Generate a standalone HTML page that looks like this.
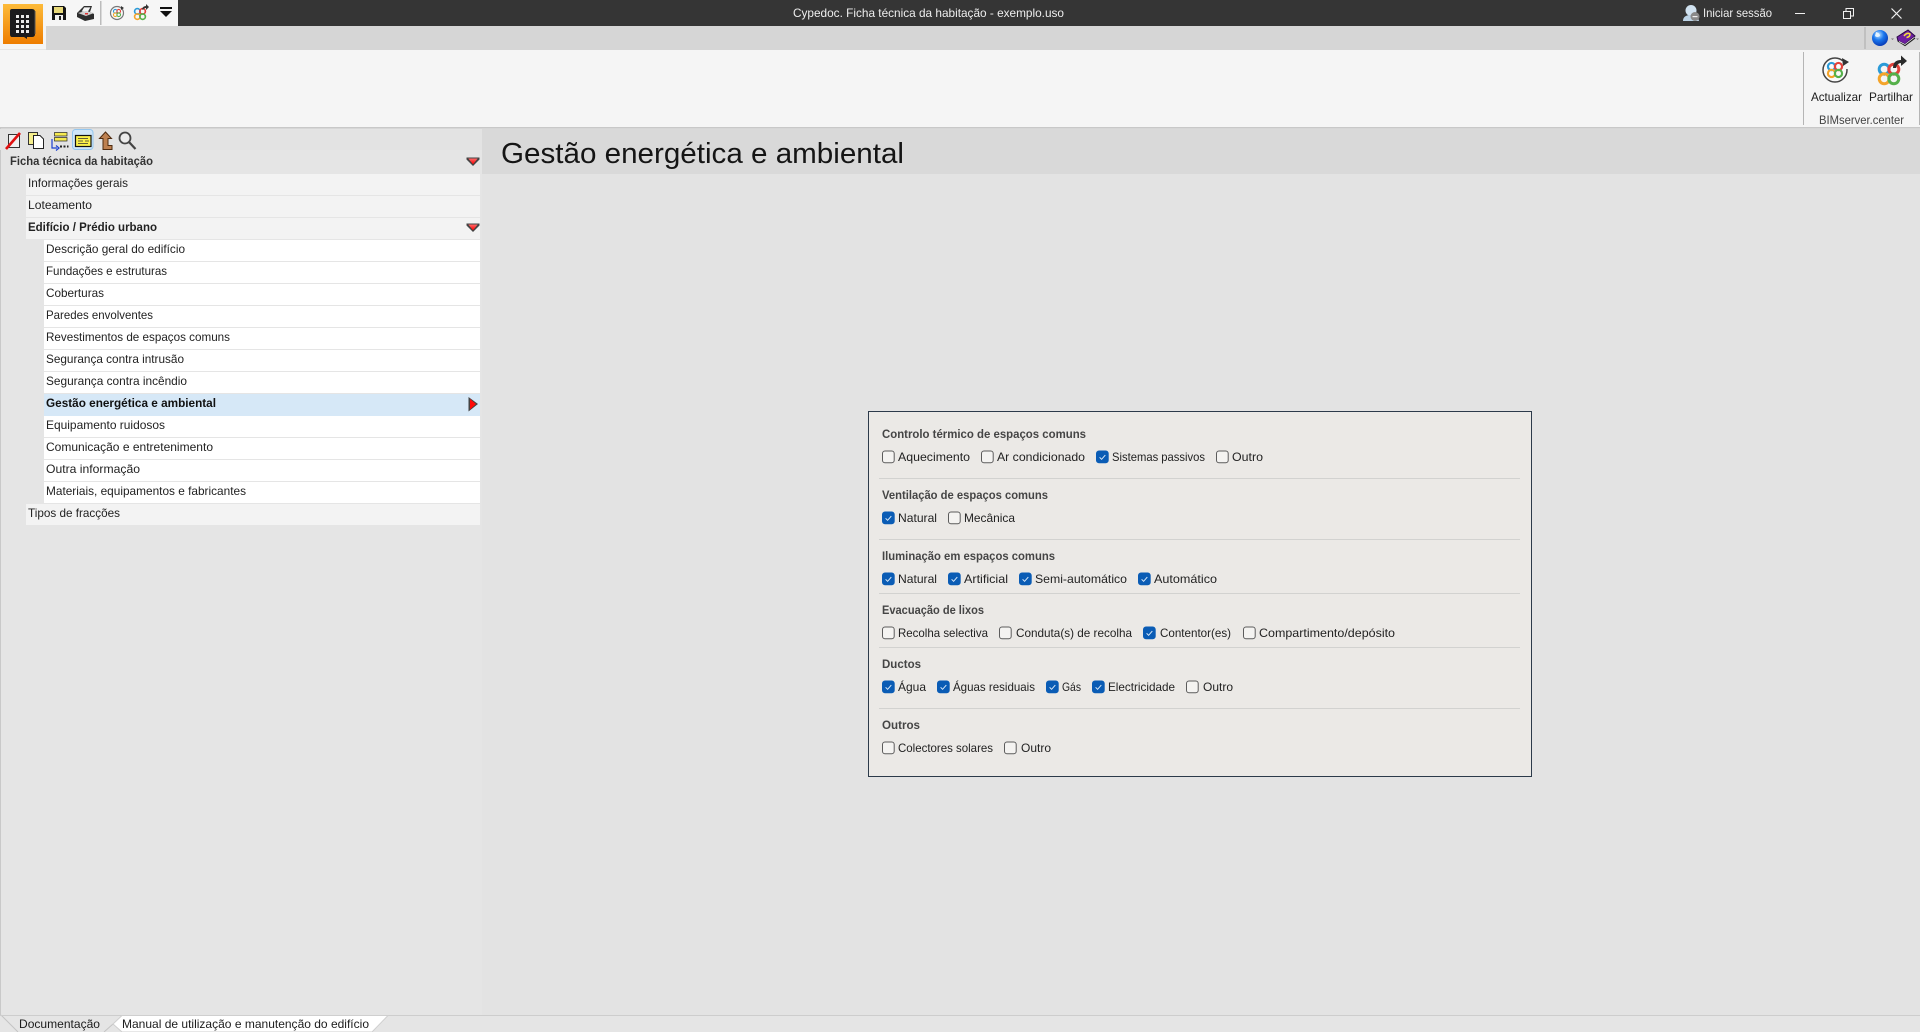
<!DOCTYPE html>
<html lang="pt">
<head>
<meta charset="utf-8">
<title>Cypedoc. Ficha técnica da habitação - exemplo.uso</title>
<style>
html,body{margin:0;padding:0;width:1920px;height:1032px;overflow:hidden;background:#e3e3e3}
svg{display:block}
text{font-family:"Liberation Sans",Arial,sans-serif;font-size:12px;fill:#222}
.b{font-weight:bold}
.h{font-weight:bold;fill:#454545}
.t{fill:#eee}
.c{fill:#1c1c1c}
</style>
</head>
<body>
<svg xmlns="http://www.w3.org/2000/svg" width="1920" height="1032" viewBox="0 0 1920 1032">
<defs>
<linearGradient id="or" x1="0" y1="0" x2="0" y2="1"><stop offset="0" stop-color="#fdbb3a"/><stop offset="1" stop-color="#ee7d00"/></linearGradient>
<radialGradient id="gl" cx=".4" cy=".3" r=".75"><stop offset="0" stop-color="#bfe4ff"/><stop offset=".45" stop-color="#1c78ee"/><stop offset="1" stop-color="#0534b0"/></radialGradient>
<linearGradient id="red" x1="0" y1="0" x2="0" y2="1"><stop offset="0" stop-color="#ff6a6a"/><stop offset="1" stop-color="#ff0000"/></linearGradient>
<g id="cb0"><rect x=".5" y=".5" width="11.700" height="11.700" rx="2.500" fill="#f4f3f1" stroke="#5c5c5c"/></g>
<g id="cb1"><rect width="12.700" height="12.700" rx="3" fill="#0a5cb5"/><path d="M3.600 6.800l2 2 3.700-4.200" fill="none" stroke="#d8e8f8" stroke-width="1"/></g>
<g id="rings" fill="none" stroke-width="3">
<circle cx="-4.800" cy="-4.800" r="5" stroke="#2b9bd8"/>
<circle cx="4.800" cy="-4.800" r="5" stroke="#e2413a"/>
<circle cx="-4.800" cy="4.800" r="5" stroke="#f4a42a"/>
<circle cx="4.800" cy="4.800" r="5" stroke="#55b04a"/>
</g>
<g id="dn"><path d="M0 .5H13V2.500L6.500 9 0 2.500Z" fill="#444"/><path d="M1.800 1.500H11.200L6.500 7.200Z" fill="url(#red)"/></g>
</defs>

<!-- title bar -->
<rect width="1920" height="26" fill="#353535"/>
<rect y="26" width="1920" height="24" fill="#d6d6d6"/>
<rect y="50" width="1920" height="77" fill="#f5f5f5"/>
<rect y="127" width="1920" height="1.500" fill="#c8c8c8"/>
<rect x="46" width="132" height="26" fill="#f6f6f6"/>
<rect width="46" height="49.500" fill="#f5f5f5"/>
<rect x="3" y="4" width="40" height="40" fill="url(#or)"/>
<path d="M12 9H32Q35 9 35 12V34Q35 37 32 37H27V39L24 37H12Q10 37 10 34V11Q10 9 12 9Z" fill="#1b1b1d"/>
<path d="M35 11V34" stroke="#555" stroke-width="1"/>
<g fill="#e8e8e8">
<rect x="16" y="15" width="3" height="3"/><rect x="21" y="15" width="3" height="3"/><rect x="26" y="15" width="3" height="3"/>
<rect x="16" y="20" width="3" height="3"/><rect x="21" y="20" width="3" height="3"/><rect x="26" y="20" width="3" height="3"/>
<rect x="16" y="25" width="3" height="3"/><rect x="21" y="25" width="3" height="3"/><rect x="26" y="25" width="3" height="3"/>
<rect x="16" y="30" width="3" height="3"/><rect x="21" y="30" width="3" height="3"/><rect x="26" y="30" width="3" height="3"/>
</g>
<!-- floppy -->
<path d="M52 6H64L66 8V20H52Z" fill="#151515"/>
<rect x="54" y="7" width="9" height="6" fill="#e8d97a"/>
<rect x="55" y="15" width="8" height="5" fill="#f2f2f2"/>
<rect x="59" y="16" width="2" height="4" fill="#222"/>
<!-- printer -->
<path d="M77 13L84 6H92L90 12L94 14V19L85 21L77 17Z" fill="#2e2e2e"/>
<path d="M84 7H91L88 12H81Z" fill="#f5f5f5" stroke="#333" stroke-width=".7"/>
<path d="M78 13L86 16L94 13L86 11Z" fill="#cfcfcf"/>
<rect x="85" y="13" width="3" height="1.500" fill="#d33"/>
<rect x="100" y="1" width="1.500" height="24" fill="#bcbcbc"/>
<!-- mini actualizar -->
<circle cx="117" cy="13" r="6.500" fill="#f8f8f8" stroke="#777" stroke-width="1.200"/>
<path d="M121 6l3 2-3 2z" fill="#333"/>
<g transform="translate(117 13) scale(.36)"><use href="#rings"/></g>
<!-- mini partilhar -->
<g transform="translate(140 14) scale(.55)"><use href="#rings"/></g>
<path d="M142 9Q143 6 146 6V4L149 7L146 10V8Q144 8 143 10Z" fill="#333"/>
<!-- dropdown -->
<rect x="160" y="7" width="12" height="2" fill="#111"/>
<path d="M160 11H172L166 17Z" fill="#111"/>

<text class="t" x="793" y="17" textLength="271" lengthAdjust="spacingAndGlyphs">Cypedoc. Ficha técnica da habitação - exemplo.uso</text>

<!-- session -->
<circle cx="1691" cy="10.500" r="5.500" fill="#d0e2f0"/>
<path d="M1683 21Q1683 15 1691 15Q1698 15 1699 21Z" fill="#bcd3e6"/>
<circle cx="1695" cy="16.500" r="4.500" fill="#8a8a8a"/>
<rect x="1692.500" y="16" width="5" height="1.200" fill="#f0f0f0"/>
<text class="t" x="1703" y="17" textLength="69" lengthAdjust="spacingAndGlyphs">Iniciar sessão</text>
<rect x="1795" y="13" width="10" height="1" fill="#f0f0f0"/>
<g fill="none" stroke="#f0f0f0" stroke-width="1"><rect x="1843.500" y="11.500" width="7" height="7"/><path d="M1846 11V8.500H1853.500V16H1851"/><path d="M1891.500 8.500L1901.500 18.500M1901.500 8.500L1891.500 18.500" stroke-width="1.200"/></g>

<!-- help area -->
<rect x="1864.500" y="27" width="1" height="22" fill="#aaa"/>
<circle cx="1880" cy="38" r="8" fill="url(#gl)"/>
<path d="M1876 32Q1880 33 1880 36Q1877 38 1875 36Z" fill="#e6f4ff"/>
<path d="M1891 38.500h3l-1.500 1.500z" fill="#777"/>
<path d="M1897 37L1908 30L1915 36L1905 44L1898 41Z" fill="#6d1fa0" stroke="#2a0b45"/>
<path d="M1898 41L1905 45.500L1915 38" fill="none" stroke="#222" stroke-width="1.300"/>
<path d="M1899 41.500L1905 44.500L1914 37.500" fill="none" stroke="#eee" stroke-width=".7"/>
<path d="M1904 36Q1907 32 1910 34Q1910 37 1906.500 37.500" fill="none" stroke="#f6de3c" stroke-width="1.600"/>
<path d="M1916 38.500h3l-1.500 1.500z" fill="#777"/>

<!-- ribbon group -->
<rect x="1803" y="52" width="1" height="73" fill="#b5b5b5"/>
<rect x="1919" y="52" width="1" height="73" fill="#b5b5b5"/>
<circle cx="1835" cy="70" r="12" fill="#fafafa" stroke="#444" stroke-width="1.500"/>
<rect x="1842" y="61" width="9" height="8" fill="#f5f5f5"/>
<path d="M1842 58L1849 62L1843 66Z" fill="#333"/>
<g transform="translate(1835 70) scale(.72)"><use href="#rings"/></g>
<g transform="translate(1889 74)"><use href="#rings"/></g>
<path d="M1893 68Q1893 60 1901 60V55.500L1907 61L1901 66V63Q1897 63 1896 68Z" fill="#2b2b2b"/>
<text class="c" x="1811" y="101" textLength="51" lengthAdjust="spacingAndGlyphs">Actualizar</text>
<text class="c" x="1869" y="101" textLength="44" lengthAdjust="spacingAndGlyphs">Partilhar</text>
<text x="1819" y="124" textLength="85" lengthAdjust="spacingAndGlyphs" style="fill:#444">BIMserver.center</text>

<!-- sidebar & main -->
<rect y="128.500" width="482" height="904" fill="#e5e5e5"/>
<rect x="0" y="128" width="1" height="887" fill="#c9c9c9"/>
<rect y="129" width="482" height="21" fill="#e3e3e3"/>
<rect x="482" y="129" width="1438" height="45" fill="#d9d9d9"/>
<rect x="482" y="174" width="1438" height="841" fill="#e3e3e3"/>

<!-- toolbar icons -->
<path d="M8.500 134.500H19.500V147.500H8.500Z" fill="#f0f0f0" stroke="#333"/>
<path d="M6 149L20 133" stroke="#e01010" stroke-width="2.600"/>
<rect x="28.500" y="132.500" width="9" height="12" fill="#f5ee8c" stroke="#333"/>
<path d="M33.500 135.500H40L43.500 139V148.500H33.500Z" fill="#fff" stroke="#222"/>
<g>
<rect x="54.500" y="132.500" width="12.500" height="3.500" fill="#f6ea50" stroke="#222" stroke-width=".7"/>
<rect x="54.500" y="137.500" width="12.500" height="3.500" fill="#f6ea50" stroke="#222" stroke-width=".7"/>
<path d="M52 139V148H57" fill="none" stroke="#1a3fd0" stroke-width="1.200"/>
<path d="M56 145.500L59 148L56 150.500" fill="none" stroke="#1a3fd0" stroke-width="1.200"/>
<path d="M60 146.500h2M63.500 146.500h2M67 146.500h1.500" stroke="#222" stroke-width="2"/>
</g>
<rect x="72.500" y="129.500" width="20.500" height="20" rx="3" fill="#cfe5f8" stroke="#93c6ef"/>
<rect x="75.500" y="135.500" width="15.500" height="11" fill="#fbf04a" stroke="#111" stroke-width="1.200"/>
<path d="M78 138.500H88M78 141H83M85 141H89M78 143.500H88" stroke="#333" stroke-width=".7"/>
<path d="M99.500 138.500L105.500 132L111.500 138.500H108V145.500H112V149.500H103V138.500Z" fill="#bd8050" stroke="#4e2b10"/>
<circle cx="125" cy="138" r="5.500" fill="#ececec" stroke="#444" stroke-width="1.800"/>
<path d="M129 142L135.500 149" stroke="#444" stroke-width="2.200"/>

<!-- tree -->
<text class="b" x="10" y="165" textLength="143" lengthAdjust="spacingAndGlyphs" style="fill:#333">Ficha técnica da habitação</text>
<use href="#dn" x="466.500" y="157"/>

<g fill="#f3f3f3"><rect x="26" y="174" width="454" height="21"/><rect x="26" y="196" width="454" height="21"/><rect x="26" y="218" width="454" height="21"/><rect x="26" y="504" width="454" height="21"/></g>
<g fill="#fff">
<rect x="44" y="240" width="436" height="21"/><rect x="44" y="262" width="436" height="21"/><rect x="44" y="284" width="436" height="21"/><rect x="44" y="306" width="436" height="21"/><rect x="44" y="328" width="436" height="21"/><rect x="44" y="350" width="436" height="21"/><rect x="44" y="372" width="436" height="21"/>
<rect x="44" y="416" width="436" height="21"/><rect x="44" y="438" width="436" height="21"/><rect x="44" y="460" width="436" height="21"/><rect x="44" y="482" width="436" height="21"/>
</g>
<rect x="44" y="394" width="436" height="22" fill="#d6e8f7"/>
<use href="#dn" x="466.500" y="223"/>
<path d="M468.500 397L478 404L468.500 411.500Z" fill="#444"/>
<path d="M470 399L476 404L470 409.500Z" fill="#ff0a0a"/>

<text x="28" y="187" textLength="100" lengthAdjust="spacingAndGlyphs">Informações gerais</text>
<text x="28" y="209" textLength="64" lengthAdjust="spacingAndGlyphs">Loteamento</text>
<text class="b" x="28" y="231" textLength="129" lengthAdjust="spacingAndGlyphs">Edifício / Prédio urbano</text>
<text x="46" y="253" textLength="139" lengthAdjust="spacingAndGlyphs">Descrição geral do edifício</text>
<text x="46" y="275" textLength="121" lengthAdjust="spacingAndGlyphs">Fundações e estruturas</text>
<text x="46" y="297" textLength="58" lengthAdjust="spacingAndGlyphs">Coberturas</text>
<text x="46" y="319" textLength="107" lengthAdjust="spacingAndGlyphs">Paredes envolventes</text>
<text x="46" y="341" textLength="184" lengthAdjust="spacingAndGlyphs">Revestimentos de espaços comuns</text>
<text x="46" y="363" textLength="138" lengthAdjust="spacingAndGlyphs">Segurança contra intrusão</text>
<text x="46" y="385" textLength="141" lengthAdjust="spacingAndGlyphs">Segurança contra incêndio</text>
<text class="b" x="46" y="407" textLength="170" lengthAdjust="spacingAndGlyphs" style="fill:#111">Gestão energética e ambiental</text>
<text x="46" y="429" textLength="119" lengthAdjust="spacingAndGlyphs">Equipamento ruidosos</text>
<text x="46" y="451" textLength="167" lengthAdjust="spacingAndGlyphs">Comunicação e entretenimento</text>
<text x="46" y="473" textLength="94" lengthAdjust="spacingAndGlyphs">Outra informação</text>
<text x="46" y="495" textLength="200" lengthAdjust="spacingAndGlyphs">Materiais, equipamentos e fabricantes</text>
<text x="28" y="517" textLength="92" lengthAdjust="spacingAndGlyphs">Tipos de fracções</text>

<!-- page heading -->
<text x="501" y="163" textLength="403" lengthAdjust="spacingAndGlyphs" style="font-size:29px;fill:#151515">Gestão energética e ambiental</text>

<!-- form panel -->
<rect x="868.500" y="411.500" width="663" height="365" fill="#ebe9e6" stroke="#2c3a4a"/>
<g fill="#d2d2d0">
<rect x="879" y="478" width="641" height="1"/><rect x="879" y="539" width="641" height="1"/><rect x="879" y="593" width="641" height="1"/><rect x="879" y="647" width="641" height="1"/><rect x="879" y="708" width="641" height="1"/>
</g>

<text class="h" x="882" y="438" textLength="204" lengthAdjust="spacingAndGlyphs">Controlo térmico de espaços comuns</text>
<use href="#cb0" x="882" y="450.500"/><text x="898" y="461" textLength="72" lengthAdjust="spacingAndGlyphs">Aquecimento</text>
<use href="#cb0" x="981" y="450.500"/><text x="997" y="461" textLength="88" lengthAdjust="spacingAndGlyphs">Ar condicionado</text>
<use href="#cb1" x="1096" y="450.500"/><text x="1112" y="461" textLength="93" lengthAdjust="spacingAndGlyphs">Sistemas passivos</text>
<use href="#cb0" x="1216" y="450.500"/><text x="1232" y="461" textLength="31" lengthAdjust="spacingAndGlyphs">Outro</text>

<text class="h" x="882" y="499" textLength="166" lengthAdjust="spacingAndGlyphs">Ventilação de espaços comuns</text>
<use href="#cb1" x="882" y="511.500"/><text x="898" y="522" textLength="39" lengthAdjust="spacingAndGlyphs">Natural</text>
<use href="#cb0" x="948" y="511.500"/><text x="964" y="522" textLength="51" lengthAdjust="spacingAndGlyphs">Mecânica</text>

<text class="h" x="882" y="560" textLength="173" lengthAdjust="spacingAndGlyphs">Iluminação em espaços comuns</text>
<use href="#cb1" x="882" y="572.500"/><text x="898" y="583" textLength="39" lengthAdjust="spacingAndGlyphs">Natural</text>
<use href="#cb1" x="948" y="572.500"/><text x="964" y="583" textLength="44" lengthAdjust="spacingAndGlyphs">Artificial</text>
<use href="#cb1" x="1019" y="572.500"/><text x="1035" y="583" textLength="92" lengthAdjust="spacingAndGlyphs">Semi-automático</text>
<use href="#cb1" x="1138" y="572.500"/><text x="1154" y="583" textLength="63" lengthAdjust="spacingAndGlyphs">Automático</text>

<text class="h" x="882" y="614" textLength="102" lengthAdjust="spacingAndGlyphs">Evacuação de lixos</text>
<use href="#cb0" x="882" y="626.500"/><text x="898" y="637" textLength="90" lengthAdjust="spacingAndGlyphs">Recolha selectiva</text>
<use href="#cb0" x="999" y="626.500"/><text x="1016" y="637" textLength="116" lengthAdjust="spacingAndGlyphs">Conduta(s) de recolha</text>
<use href="#cb1" x="1143" y="626.500"/><text x="1160" y="637" textLength="71" lengthAdjust="spacingAndGlyphs">Contentor(es)</text>
<use href="#cb0" x="1243" y="626.500"/><text x="1259" y="637" textLength="136" lengthAdjust="spacingAndGlyphs">Compartimento/depósito</text>

<text class="h" x="882" y="668" textLength="39" lengthAdjust="spacingAndGlyphs">Ductos</text>
<use href="#cb1" x="882" y="680.500"/><text x="898" y="691" textLength="28" lengthAdjust="spacingAndGlyphs">Água</text>
<use href="#cb1" x="937" y="680.500"/><text x="953" y="691" textLength="82" lengthAdjust="spacingAndGlyphs">Águas residuais</text>
<use href="#cb1" x="1046" y="680.500"/><text x="1062" y="691" textLength="19" lengthAdjust="spacingAndGlyphs">Gás</text>
<use href="#cb1" x="1092" y="680.500"/><text x="1108" y="691" textLength="67" lengthAdjust="spacingAndGlyphs">Electricidade</text>
<use href="#cb0" x="1186" y="680.500"/><text x="1203" y="691" textLength="30" lengthAdjust="spacingAndGlyphs">Outro</text>

<text class="h" x="882" y="729" textLength="38" lengthAdjust="spacingAndGlyphs">Outros</text>
<use href="#cb0" x="882" y="741.500"/><text x="898" y="752" textLength="95" lengthAdjust="spacingAndGlyphs">Colectores solares</text>
<use href="#cb0" x="1004" y="741.500"/><text x="1021" y="752" textLength="30" lengthAdjust="spacingAndGlyphs">Outro</text>

<!-- bottom tabs -->
<rect y="1015" width="1920" height="17" fill="#e5e5e5"/>
<path d="M1 1015L18 1032M104 1032L113 1024" stroke="#c4c4c4" fill="none"/>
<path d="M0 1015.500H122" stroke="#cdcdcd" fill="none"/>
<path d="M388 1015.500H1920" stroke="#cdcdcd"/>
<path d="M122 1015.500H388L372 1032H122L113 1024Z" fill="#fff" stroke="#cfcfcf"/>
<text x="19" y="1028" textLength="81" lengthAdjust="spacingAndGlyphs" class="c">Documentação</text>
<text x="122" y="1028" textLength="247" lengthAdjust="spacingAndGlyphs" class="c">Manual de utilização e manutenção do edifício</text>
</svg>
</body>
</html>
